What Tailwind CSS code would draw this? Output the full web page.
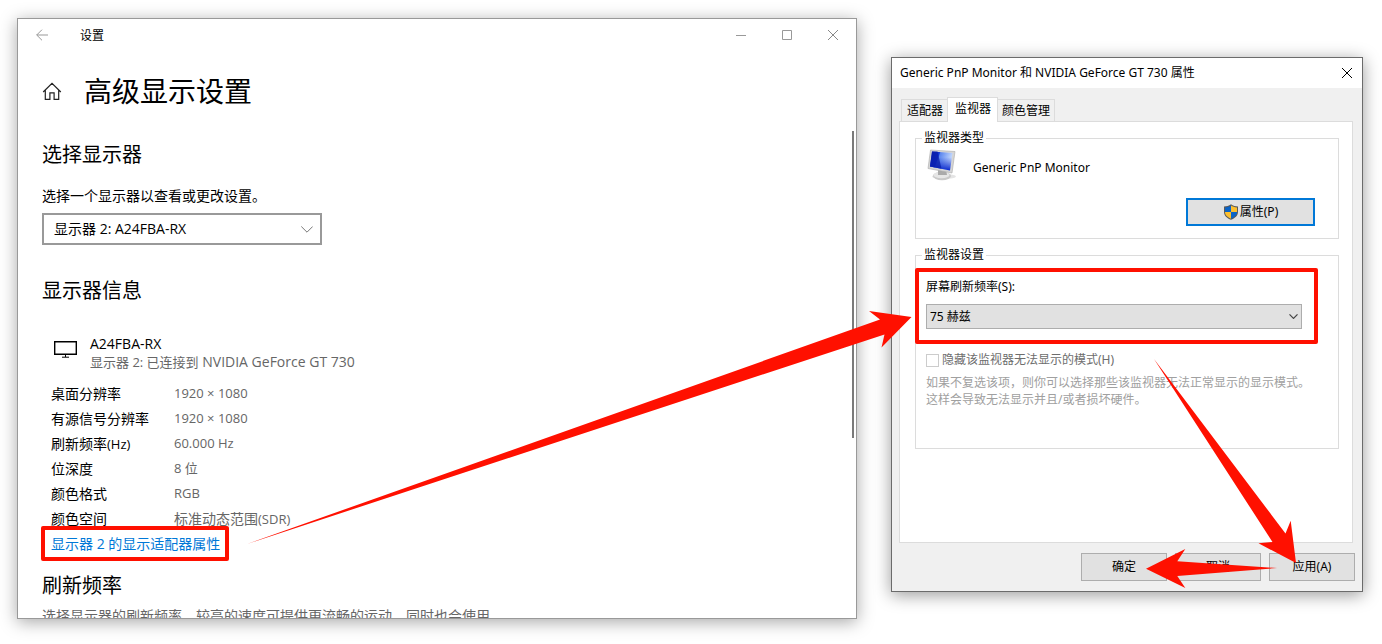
<!DOCTYPE html>
<html lang="zh-CN">
  <head>
    <meta charset="UTF-8" />
    <meta name="viewport" content="width=device-width, initial-scale=1.0" />
    <title>高级显示设置</title>
    <script src="https://cdn.jsdelivr.net/npm/@tailwindcss/browser@4"></script>
  </head>
  <body class="relative bg-white text-black font-['Open_Sans','Noto_Sans_CJK_SC',sans-serif]">
    <main class="flex h-screen gap-[34px] overflow-hidden pt-[18px] pb-[25px] pl-[17px] pr-[19px]">
      <!-- Settings window -->
      <section
        class="relative flex min-w-0 flex-1 flex-col overflow-hidden border border-[#999] bg-white shadow-[0_3px_16px_rgba(0,0,0,0.35)]"
      >
        <header class="flex h-8 shrink-0 items-center pl-[18px] text-xs">
          <button type="button" aria-label="返回">
            <svg class="h-3 w-3" viewBox="0 0 12 12" fill="none" stroke="#999">
              <path d="M12 6H.7M6 .7.7 6 6 11.3" />
            </svg>
          </button>
          <span class="ml-8 pt-0.5">设置</span>
          <div class="ml-auto flex">
            <button type="button" aria-label="最小化" class="flex h-8 w-[46px] items-center justify-center">
              <svg class="h-2.5 w-2.5" viewBox="0 0 10 10" stroke="#999"><path d="M0 5.5h10" /></svg>
            </button>
            <button type="button" aria-label="最大化" class="flex h-8 w-[46px] items-center justify-center">
              <svg class="h-2.5 w-2.5" viewBox="0 0 10 10" fill="none" stroke="#999"><path d="M.5.5h9v9h-9z" /></svg>
            </button>
            <button type="button" aria-label="关闭" class="flex h-8 w-[46px] items-center justify-center">
              <svg class="h-2.5 w-2.5" viewBox="0 0 10 10" stroke="#888"><path d="M0 0l10 10M10 0L0 10" /></svg>
            </button>
          </div>
        </header>

        <div class="flex-1 px-6 pt-5 text-sm">
          <div class="flex items-center gap-[22px]">
            <svg class="h-5 w-5" viewBox="0 0 20 20" fill="none" stroke="#222" stroke-width="1.2">
              <path d="M1.2 11 10 2.4l8.8 8.6M3.3 9v9.4h4.6v-6.5h4.2v6.5h4.6V9" />
            </svg>
            <h1 class="text-[28px] leading-10">高级显示设置</h1>
          </div>

          <h2 class="mt-[30px] text-xl leading-7">选择显示器</h2>
          <label for="display" class="mt-[17px] block leading-5">选择一个显示器以查看或更改设置。</label>
          <div class="relative mt-[7px] w-[280px]">
            <select id="display" class="h-8 w-full appearance-none border-2 border-[#999] bg-white pl-2.5 text-sm">
              <option>显示器 2: A24FBA-RX</option>
            </select>
            <svg
              class="pointer-events-none absolute top-[13px] right-[9px] h-[7px] w-3"
              viewBox="0 0 12 7"
              fill="none"
              stroke="#777"
            >
              <path d="M.3.5 6 6.2 11.7.5" />
            </svg>
          </div>

          <h2 class="mt-8 text-xl leading-7">显示器信息</h2>
          <div class="mt-[30px] flex gap-[13px] pl-3 text-sm leading-[18px]">
            <svg class="mt-1.5 h-[18px] w-[23px]" viewBox="0 0 23 18" fill="none" stroke="#000">
              <path stroke-width="1.4" d="M.7.7h21.6v12.6H.7z" />
              <path d="M11.5 13.5v2.5M8 16.2h7" />
            </svg>
            <div>
              <p class="h-[18px]">A24FBA-RX</p>
              <p class="h-[18px] text-[#666]">
                <span class="text-[13px]">显示器 2: 已连接到</span> NVIDIA GeForce GT 730
              </p>
            </div>
          </div>

          <dl class="mt-2.5 grid auto-rows-[25px] grid-cols-[123px_1fr] pl-[9px] leading-[25px]">
            <dt>桌面分辨率</dt>
            <dd class="text-[13px] leading-[25px] text-[#666]">1920 × 1080</dd>
            <dt>有源信号分辨率</dt>
            <dd class="text-[13px] leading-[25px] text-[#666]">1920 × 1080</dd>
            <dt>刷新频率<span class="text-[13px]">(Hz)</span></dt>
            <dd class="text-[13px] leading-[25px] text-[#666]">60.000 Hz</dd>
            <dt>位深度</dt>
            <dd class="text-[13px] leading-[25px] text-[#666]">8 位</dd>
            <dt>颜色格式</dt>
            <dd class="text-[13px] leading-[25px] text-[#666]">RGB</dd>
            <dt>颜色空间</dt>
            <dd class="text-[#666]">标准动态范围<span class="text-[13px]">(SDR)</span></dd>
          </dl>
          <a href="#" class="ml-[9px] block h-[25px] leading-[25px] text-[#0078d7]">显示器 2 的显示适配器属性</a>

          <h2 class="mt-4 text-xl leading-7">刷新频率</h2>
          <p class="mt-1.5 leading-5 whitespace-nowrap text-[#666]">
            选择显示器的刷新频率。较高的速度可提供更流畅的运动，同时也会使用
          </p>
        </div>

        <!-- scroll thumb -->
        <div class="absolute top-[112px] right-0.5 h-[307px] w-0.5 bg-[#7a7a7a]"></div>
      </section>

      <!-- Monitor properties dialog -->
      <section
        class="mt-[39px] w-[472px] shrink-0 self-start border border-[#6b6b6b] bg-[#f0f0f0] text-xs font-['Noto_Sans','Noto_Sans_CJK_SC',sans-serif] shadow-[0_3px_16px_rgba(0,0,0,0.4)]"
      >
        <header class="flex h-[30px] items-center justify-between bg-white pr-2.5 pl-2">
          <h2>Generic PnP Monitor 和 NVIDIA GeForce GT 730 属性</h2>
          <button type="button" aria-label="关闭">
            <svg class="h-2.5 w-2.5" viewBox="0 0 10 10" stroke="#000"><path d="M0 0l10 10M10 0L0 10" /></svg>
          </button>
        </header>

        <div class="px-[7px] pt-[9px] pb-2.5">
          <div role="tablist" class="relative z-10 -mb-px flex items-end pl-0.5">
            <button type="button" role="tab" class="mb-px h-[22px] border border-b-0 border-[#dcdcdc] pr-1 pl-[5px]">适配器</button>
            <button type="button" role="tab" aria-selected="true" class="-ml-px h-[25px] border border-b-0 border-[#dcdcdc] bg-white pr-1.5 pl-[7px] pb-0.5">
              监视器
            </button>
            <button type="button" role="tab" class="mb-px h-[22px] border border-b-0 border-l-0 border-[#dcdcdc] px-1">颜色管理</button>
          </div>

          <div role="tabpanel" class="mr-0.5 border border-[#dcdcdc] bg-white pt-2 pr-[13px] pb-[93px] pl-[15px]">
            <fieldset class="border border-[#dcdcdc] pr-[23px] pb-3 pl-2.5">
              <legend class="-ml-1 px-0.5 leading-4">监视器类型</legend>
              <div class="flex items-center gap-4">
                <svg class="mt-[3px] h-8 w-[31px]" viewBox="0 0 31 32">
                  <defs>
                    <linearGradient id="screen" x1="0" y1="0" x2="1" y2="0.3">
                      <stop offset="0" stop-color="#0a1fb0" />
                      <stop offset="0.4" stop-color="#1238d8" />
                      <stop offset="0.45" stop-color="#5b86ee" />
                      <stop offset="1" stop-color="#c8dcff" />
                    </linearGradient>
                    <linearGradient id="lower" x1="0" y1="0" x2="0" y2="1">
                      <stop offset="0.3" stop-color="#0626cc" stop-opacity="0" />
                      <stop offset="1" stop-color="#0626cc" />
                    </linearGradient>
                  </defs>
                  <ellipse cx="18" cy="27.5" rx="12" ry="2.6" fill="#e4e4e4" />
                  <ellipse cx="16" cy="27" rx="9" ry="4.2" fill="#c9c9c9" />
                  <ellipse cx="15.5" cy="26" rx="8" ry="3.2" fill="#e6e6e6" />
                  <path d="M12 21h8l1 5h-9z" fill="#aaa" />
                  <path d="M4.5 1 29 2.5 26 24 2 19.500z" fill="#d5d5d5" stroke="#aaa" stroke-width=".6" />
                  <path d="M6 2.500 26.500 4 24 21.500 4 17.500z" fill="url(#screen)" />
                  <path d="M6 2.500 26.500 4 24 21.500 4 17.500z" fill="url(#lower)" />
                  <path d="M6 2.500h5.500L15.500 19.800 4 17.500z" fill="#0a1ea8" opacity=".75" />
                </svg>
                <span class="pt-2">Generic PnP Monitor</span>
              </div>
              <div class="mt-[17px] flex justify-end">
                <button
                  type="button"
                  class="flex h-7 w-[129px] items-center justify-center border-2 border-[#0078d7] bg-[#e1e1e1]"
                >
                  <svg class="mr-px h-4 w-4" viewBox="0 0 16 16">
                    <path d="M8 .3C6 2 3.500 2.400 1 2.400V8c0 3.600 3 6.200 7 7.800 4-1.600 7-4.200 7-7.800V2.400C12.500 2.400 10 2 8 .3z" fill="#5a5a5a" />
                    <path d="M8 1.600V8H2V3.400C4.400 3.300 6.400 2.800 8 1.600z" fill="#0a64c8" />
                    <path d="M8 1.600V8h6V3.400C11.600 3.300 9.600 2.800 8 1.600z" fill="#fdbf2d" />
                    <path d="M8 8v6.700C4.700 13.300 2 11.200 2 8z" fill="#fdbf2d" />
                    <path d="M8 8v6.700c3.300-1.400 6-3.500 6-6.700z" fill="#0a64c8" />
                  </svg>
                  属性(P)
                </button>
              </div>
            </fieldset>

            <fieldset class="mt-2 border border-[#dcdcdc] pb-10 pl-2.5">
              <legend class="-ml-1 px-0.5 leading-4">监视器设置</legend>
              <label for="rate" class="mt-4 block leading-4">屏幕刷新频率(S):</label>
              <div class="relative mt-[9px] mr-9">
                <select id="rate" class="h-[25px] w-full appearance-none border border-[#adadad] bg-[#e1e1e1] pl-[3px]">
                  <option>75 赫兹</option>
                </select>
                <svg
                  class="pointer-events-none absolute top-2.5 right-1 h-[5px] w-[9px]"
                  viewBox="0 0 9 5"
                  fill="none"
                  stroke="#444"
                  stroke-width="1.2"
                >
                  <path d="M.5.4l4 4 4-4" />
                </svg>
              </div>
              <div class="mt-[22px] flex items-center gap-[3px] leading-[18px] text-[#6d6d6d]">
                <input
                  type="checkbox"
                  id="hide-modes"
                  disabled
                  class="h-[13px] w-[13px] appearance-none border border-[#ccc] bg-white"
                />
                <label for="hide-modes">隐藏该监视器无法显示的模式(H)</label>
              </div>
              <p class="mt-[5px] leading-[17px] whitespace-nowrap text-[#a0a0a0]">
                如果不复选该项，则你可以选择那些该监视器无法正常显示的显示模式。<br />
                这样会导致无法显示并且/或者损坏硬件。
              </p>
            </fieldset>
          </div>

          <div class="mt-2.5 flex justify-end gap-2">
            <button type="button" class="h-7 w-[86px] border border-[#adadad] bg-[#e1e1e1]">确定</button>
            <button type="button" class="h-7 w-[86px] border border-[#adadad] bg-[#e1e1e1]">取消</button>
            <button type="button" class="h-7 w-[86px] border border-[#adadad] bg-[#e1e1e1]">应用(A)</button>
          </div>
        </div>
      </section>
    </main>

    <!-- Step annotations drawn over both windows -->
    <svg class="pointer-events-none absolute top-0 left-0 z-20 h-[644px] w-[1382px]" viewBox="0 0 1382 644">
      <g fill="none" stroke="#ff1000" stroke-width="4" stroke-linejoin="round">
        <rect x="43" y="528" width="184" height="31" />
        <rect x="917" y="270" width="399" height="72" />
      </g>
      <g fill="#ff1000">
        <path d="M247 544 880 319.500 869 311 911.500 317 881.500 347.500 884.500 334.500z" />
        <path d="M1154 359 1285.500 533.500 1290.700 520.700 1296 563 1258.500 543.300 1272.500 542z" />
        <path d="M1277 568 1177.300 561.300 1185.300 549 1146 568.700 1185.300 588 1177.300 576z" />
      </g>
    </svg>
  </body>
</html>
